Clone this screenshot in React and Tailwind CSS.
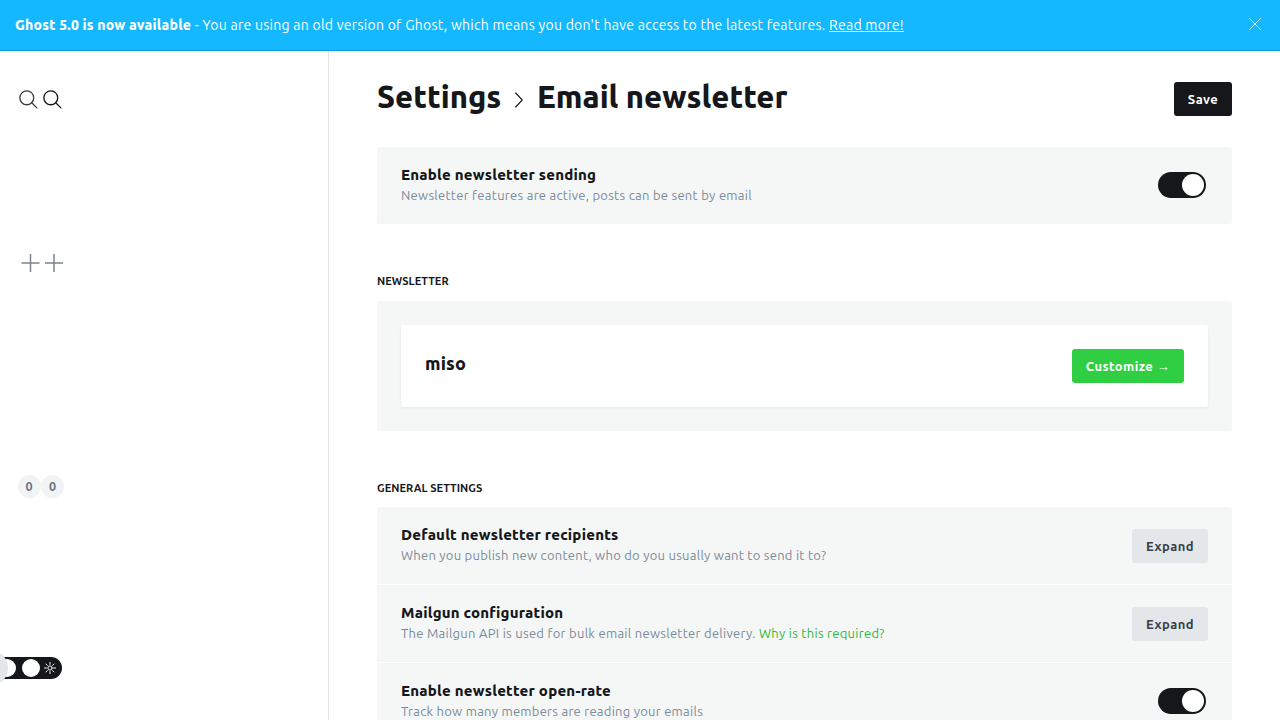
const font = "font-['Ubuntu','Noto_Sans',sans-serif]";

function Search({ className }) {
  return (
    <svg className={className} width="19" height="19" viewBox="0 0 20 20" fill="none" stroke="currentColor" strokeWidth="1.4" strokeLinecap="round">
      <circle cx="8.2" cy="8.2" r="7.3" />
      <path d="M13.4 13.4 L18.8 18.8" />
    </svg>
  );
}

function Plus({ x = 9 }) {
  return (
    <svg className="overflow-visible" width="18" height="18" viewBox="0 0 18 18" stroke="#7c858b" strokeWidth="1.5">
      <path d={`M${x - 9} 9H${x + 9}M${x} 0V18`} />
    </svg>
  );
}

function Badge() {
  return <span className="flex h-[23px] w-[23px] items-center justify-center rounded-full bg-[#f1f3f4] text-[12.5px] font-bold text-[#66727e]">0</span>;
}

function Toggle() {
  return (
    <div className="flex h-[26px] w-12 items-center justify-end rounded-full bg-[#15171a] pr-[2px]">
      <div className="h-[22px] w-[22px] rounded-full bg-white" />
    </div>
  );
}

function Sun() {
  return (
    <svg width="12" height="12" viewBox="0 0 12 12" fill="none" stroke="#fff" strokeWidth=".95" strokeLinecap="round">
      <circle cx="6" cy="6" r="2.1" />
      <path d="M6 .4V2.4M6 9.6v2M.4 6h2M9.6 6h2M2 2l1.4 1.4M8.6 8.6L10 10M10 2L8.6 3.4M3.4 8.6L2 10" />
    </svg>
  );
}

function Row({ title, children, action, className = '' }) {
  return (
    <div className={`flex h-[77px] shrink-0 justify-between bg-[#f4f7f6] pl-6 ${className}`}>
      <div className="pt-[17px]">
        <h4 className="h-[21px] whitespace-nowrap text-[15px] font-extrabold leading-[21px] tracking-[0.2px] text-[#15171a]">{title}</h4>
        {children}
      </div>
      {action}
    </div>
  );
}

const descBase = 'whitespace-nowrap text-[13px] leading-[20px] text-[#7c8b9a]';
const desc = `${descBase} tracking-[0.28px]`;
const descTight = `${descBase} tracking-[0.26px]`;
const button = 'h-[34px] whitespace-nowrap rounded-[3px] pt-px text-[13px] font-[590] tracking-[0.42px]';
const label = 'mt-[49px] h-[16px] shrink-0 text-[11px] font-[570] leading-[16px] tracking-[0.05px] text-[#15171a]';

function Expand() {
  return <button className={`mr-6 mt-[22px] w-[76px] bg-[#e3e7ea] text-[#394047] ${button}`}>Expand</button>;
}

export default function App() {
  return (
    <div className={`flex h-screen w-full flex-col overflow-hidden bg-white ${font}`}>
      <header className="flex h-[51px] shrink-0 items-center justify-between border-b border-[#0a9fe6] bg-[#14b8ff] pl-[15px] pr-[19px] text-[14px] text-white">
        <p className="whitespace-nowrap">
          <b className="font-extrabold tracking-[0.2px]">Ghost 5.0 is now available</b>
          <span className="tracking-[0.27px]"> - You are using an old version of Ghost, which means you don't have access to the latest features. <a className="underline">Read more!</a></span>
        </p>
        <svg className="mb-[2px]" width="12" height="12" viewBox="0 0 12 12" stroke="#fff" strokeWidth=".8"><path d="M0 0L12 12M12 0L0 12" /></svg>
      </header>
      <div className="flex min-h-0 flex-1">
        <aside className="flex w-[329px] shrink-0 flex-col border-r border-[#e3e6e8]">
          <div className="ml-[19px] mt-[39px] flex h-[19px] gap-[5px]">
            <Search className="text-[#3b3d3f]" />
            <Search className="text-[#15171a]" />
          </div>
          <div className="ml-[21px] mt-[145px] flex h-[18px] gap-[6px]">
            <Plus x={9.5} />
            <Plus />
          </div>
          <div className="ml-[17.5px] mt-[203px] flex gap-[0.5px]">
            <Badge />
            <Badge />
          </div>
          <div className="relative mt-[159px] flex h-[22px] w-[62px] items-center rounded-r-full bg-[#15171a]">
            <div className="absolute left-[-2px] h-[18px] w-[18px] rounded-full bg-white" />
            <div className="absolute left-[-28px] top-[-7px] h-9 w-9 rounded-full bg-[#e3e7ea]" />
            <div className="ml-[22px] h-[18px] w-[18px] rounded-full bg-white" />
            <div className="ml-[4px]"><Sun /></div>
          </div>
        </aside>
        <main className="flex min-w-0 flex-1 flex-col overflow-hidden pl-12 pr-12">
          <div className="flex h-[96px] shrink-0 justify-between pt-[31px]">
            <h2 className="flex h-[30px] items-center whitespace-nowrap text-[31px] font-extrabold text-[#15171a]">
              <span className="w-[138px]">Settings</span>
              <svg className="mr-[14px] mt-[6px]" width="8" height="16" viewBox="0 0 8 16" fill="none" stroke="currentColor" strokeWidth="1.15" strokeLinecap="round"><path d="M.7 1L7.3 8L.7 15" /></svg>
              <span>Email newsletter</span>
            </h2>
            <button className={`w-[58px] bg-[#15171a] text-white ${button}`}>Save</button>
          </div>
          <Row className="rounded-[3px]" title="Enable newsletter sending" action={<div className="mr-[26px] mt-[25px]"><Toggle /></div>}>
            <p className={desc}>Newsletter features are active, posts can be sent by email</p>
          </Row>
          <h3 className={label}>NEWSLETTER</h3>
          <section className="mt-[12px] h-[130px] shrink-0 rounded-[3px] bg-[#f4f7f6] p-6">
            <div className="flex h-[82px] justify-between rounded-[3px] bg-white p-6 shadow-[0_1px_3px_rgba(0,0,0,0.06)]">
              <h3 className="text-[18px] font-extrabold leading-[29px] tracking-[0.15px] text-[#15171a]">miso</h3>
              <button className={`w-[112px] bg-[#30cf43] text-white ${button}`}>Customize →</button>
            </div>
          </section>
          <h3 className={label}>GENERAL SETTINGS</h3>
          <section className="mt-[11px] flex shrink-0 flex-col gap-px">
            <Row className="rounded-t-[3px]" title="Default newsletter recipients" action={<Expand />}>
              <p className={descTight}>When you publish new content, who do you usually want to send it to?</p>
            </Row>
            <Row title="Mailgun configuration" action={<Expand />}>
              <p className={desc}>The Mailgun API is used for bulk email newsletter delivery. <a className="text-[#30b840]">Why is this required?</a></p>
            </Row>
            <Row title="Enable newsletter open-rate" action={<div className="mr-[26px] mt-[25px]"><Toggle /></div>}>
              <p className={descTight}>Track how many members are reading your emails</p>
            </Row>
          </section>
        </main>
      </div>
    </div>
  );
}
